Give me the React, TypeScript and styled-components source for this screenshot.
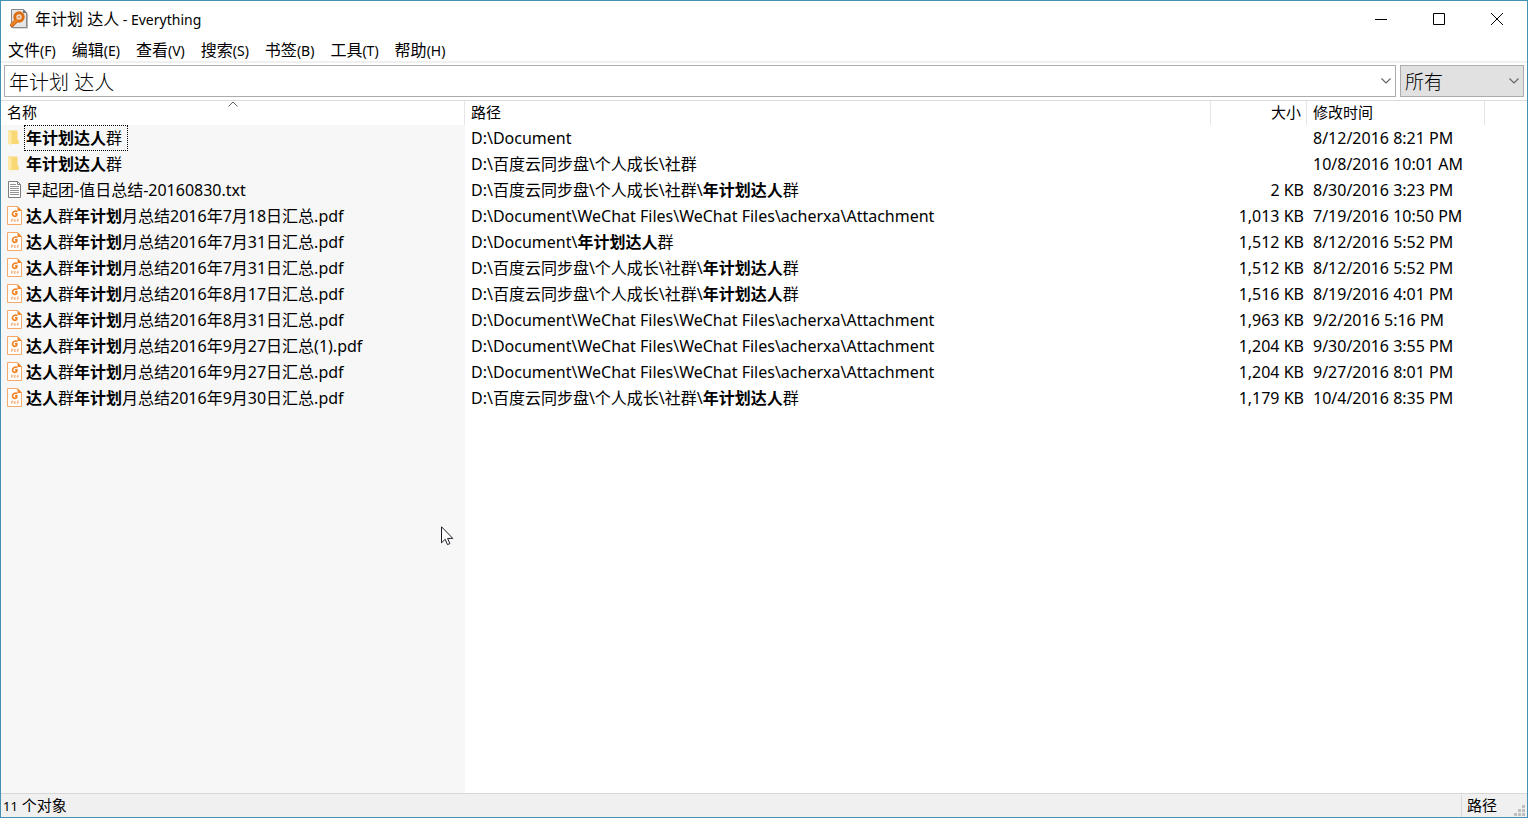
import React from "react";
import styled, { createGlobalStyle } from "styled-components";

const GlobalStyle = createGlobalStyle`
  *, *::before, *::after { box-sizing: border-box; }
  body { margin: 0; background: #fff; }
  body, button, input, select, table {
    font-family: "Noto Sans", "Noto Sans CJK SC", sans-serif;
    color: #000;
  }
`;

const Window = styled.div`
  display: flex;
  flex-direction: column;
  min-height: 100vh;
  border: 1px solid #4392b5;
  background: #fff;
`;

const TitleBar = styled.header`
  display: flex;
  align-items: center;
  height: 36px;
  padding: 0 1px 0 8px;
`;

const Title = styled.h1`
  flex: 1;
  margin: 0 0 0 6px;
  font-size: 16px;
  line-height: 24px;
  font-weight: 400;
`;

const Latin = styled.span<{ $size: number }>`
  font-size: ${(p) => p.$size}px;
`;

const WindowButton = styled.button`
  display: grid;
  place-items: center;
  width: 58px;
  height: 36px;
  padding: 0;
  border: 0;
  background: transparent;
`;

const MenuBar = styled.nav`
  display: flex;
  gap: 16px;
  height: 26px;
  padding: 0 7px;
  border-bottom: 2px solid #f0f0f0;
`;

const MenuButton = styled.button`
  padding: 1px 0 0;
  border: 0;
  background: transparent;
  font-size: 16px;
  line-height: 24px;
  white-space: nowrap;
`;

const SearchRow = styled.div`
  display: flex;
  gap: 4px;
  padding: 2px 3px 3px;
`;

const Combo = styled.div<{ $filter?: boolean }>`
  display: flex;
  align-items: center;
  flex: ${(p) => (p.$filter ? "0 0 124px" : "1 1 0")};
  height: 32px;
  padding-right: 3px;
  border: 1px solid #acacac;
  background: ${(p) => (p.$filter ? "#e1e1e1" : "#fff")};
`;

const SearchInput = styled.input`
  flex: 1;
  min-width: 0;
  height: 30px;
  padding: 0 4px;
  border: 0;
  outline: 0;
  background: transparent;
  font-size: 20px;
  font-weight: 300;
`;

const FilterSelect = styled.select`
  flex: 1;
  min-width: 0;
  height: 30px;
  padding: 1px 4px 0;
  border: 0;
  outline: 0;
  appearance: none;
  background: transparent;
  font-size: 19px;
  font-weight: 300;
`;

const Results = styled.main`
  flex: 1;
  border-top: 1px solid #dcdcdc;
  background: linear-gradient(#f7f7f7, #f7f7f7) 0 24px / 464px 100% no-repeat;
`;

const Table = styled.table`
  width: 100%;
  table-layout: fixed;
  border-collapse: separate;
  border-spacing: 0;
  font-size: 16px;
`;

const Col = styled.col<{ $width?: number }>`
  width: ${(p) => (p.$width ? `${p.$width}px` : "auto")};
`;

const HeadCell = styled.th<{ $align?: string; $last?: boolean }>`
  height: 24px;
  padding: 0 5px 2px 6px;
  border-right: ${(p) => (p.$last ? "0" : "1px solid #e5e5e5")};
  background: #fff;
  font-size: 15px;
  line-height: 22px;
  font-weight: 400;
  text-align: ${(p) => p.$align ?? "left"};
  white-space: nowrap;
`;

const SortHead = styled.div`
  position: relative;
`;

const SortMark = styled.svg`
  position: absolute;
  top: 0;
  left: 50%;
  transform: translateX(-50%);
`;

const Cell = styled.td<{ $align?: string }>`
  height: 26px;
  padding: 0 3px 0 6px;
  line-height: 24px;
  text-align: ${(p) => p.$align ?? "left"};
  white-space: nowrap;
`;

const FileCell = styled.div`
  display: flex;
  align-items: center;
`;

const FileName = styled.span<{ $focused?: boolean }>`
  margin-left: 1px;
  padding: 0 5px 0 1px;
  border: 1px dotted ${(p) => (p.$focused ? "#000" : "transparent")};
`;

const StatusBar = styled.footer`
  display: flex;
  justify-content: space-between;
  height: 24px;
  border-top: 1px solid #d7d7d7;
  background: #f0f0f0;
  font-size: 15px;
  line-height: 22px;
`;

const StatusText = styled.span`
  padding-left: 2px;
`;

const StatusPanel = styled.div`
  display: flex;
  align-items: flex-end;
  justify-content: space-between;
  width: 66px;
  margin-top: 1px;
  padding: 0 2px 1px 5px;
  border-left: 1px solid #d7d7d7;
`;

const Pointer = styled.svg`
  position: absolute;
  left: 441px;
  top: 526px;
  pointer-events: none;
`;

function AppIcon() {
  return (
    <svg width="20" height="20" viewBox="0 0 20 20" aria-hidden="true">
      <path d="M4 2h12l3 3v14.500H4z" fill="#b5b5b5" />
      <path d="M2.500.500h12l3 3v15h-15z" fill="#e6e6e6" stroke="#8a8a8a" />
      <path d="M14 .500v3.500h4z" fill="#777" />
      <path d="M7.500 11.500 3 16" stroke="#c9600f" strokeWidth="4" strokeLinecap="round" />
      <circle cx="10" cy="8" r="4.200" fill="#f5dcc4" stroke="#dc6f14" strokeWidth="3" />
      <path d="M7.500 11.500 3 15.500" stroke="#ee8526" strokeWidth="2.400" strokeLinecap="round" />
      <circle cx="10" cy="8" r="1.300" fill="#d99a6a" />
    </svg>
  );
}

function FolderIcon() {
  return (
    <svg width="16" height="18" viewBox="0 0 16 18" aria-hidden="true">
      <path d="M1 1.500h9.500v9h1V15H4.500L1 14z" fill="#f9d978" />
      <path d="M9.500 3v8h2v4H4.500V3z" fill="#f8d775" />
      <path d="M1 1.500l3.500 2v13L1 14.500z" fill="#ffe8a3" />
    </svg>
  );
}

function TextIcon() {
  return (
    <svg width="16" height="18" viewBox="0 0 16 18" aria-hidden="true">
      <path d="M1.500.500h9l3 3v13h-12z" fill="#fff" stroke="#7c7c7c" />
      <path d="M10.500.500v3h3" fill="none" stroke="#7c7c7c" />
      <path d="M3 3.500h6M3 5.500h9M3 7.500h9M3 9.500h9M3 11.500h9M3 13.500h9" stroke="#949494" />
    </svg>
  );
}

function PdfIcon() {
  return (
    <svg width="16" height="20" viewBox="0 0 16 20" aria-hidden="true">
      <path d="M.5.500h10l4 4v14H.500z" fill="#fff" stroke="#f5a96a" />
      <path d="M10.500 0v5h4.500z" fill="#f18a32" />
      <path d="M10.500 5.500C7.500 4.500 5.500 6 5.500 8s2.500 3.200 4 1.600c.6-.7.5-1.200.3-1.800H8" fill="none" stroke="#f18427" strokeWidth="1.700" />
      <path d="M4.500 16v-3H6v1.500H4.500M7.500 13v3M8 13l1 1.500L8 16M10.500 16v-3H12M10.500 14.500H12" fill="none" stroke="#f6b07c" strokeWidth=".8" />
    </svg>
  );
}

function Chevron() {
  return (
    <svg width="12" height="8" viewBox="0 0 12 8" aria-hidden="true">
      <path d="M1.500 1.500 6 6l4.500-4.500" fill="none" stroke="#606060" strokeWidth="1.100" />
    </svg>
  );
}

type Kind = "folder" | "text" | "pdf";

/* Asterisks enclose the parts of a name that match the search terms. */
function Marked({ text }: { text: string }) {
  return <>{text.split("*").map((part, i) => (i % 2 ? <b key={i}>{part}</b> : part))}</>;
}

const icons = { folder: FolderIcon, text: TextIcon, pdf: PdfIcon };

const attachment = "D:\\Document\\WeChat Files\\WeChat Files\\acherxa\\Attachment";
const community = "D:\\百度云同步盘\\个人成长\\社群";
const group = "*年计划达人*群";

const files: { kind: Kind; name: string; path: string; size: string; date: string }[] = [
  { kind: "folder", name: group, path: "D:\\Document", size: "", date: "8/12/2016 8:21 PM" },
  { kind: "folder", name: group, path: community, size: "", date: "10/8/2016 10:01 AM" },
  { kind: "text", name: "早起团-值日总结-20160830.txt", path: `${community}\\${group}`, size: "2 KB", date: "8/30/2016 3:23 PM" },
  { kind: "pdf", name: "*达人*群*年计划*月总结2016年7月18日汇总.pdf", path: attachment, size: "1,013 KB", date: "7/19/2016 10:50 PM" },
  { kind: "pdf", name: "*达人*群*年计划*月总结2016年7月31日汇总.pdf", path: `D:\\Document\\${group}`, size: "1,512 KB", date: "8/12/2016 5:52 PM" },
  { kind: "pdf", name: "*达人*群*年计划*月总结2016年7月31日汇总.pdf", path: `${community}\\${group}`, size: "1,512 KB", date: "8/12/2016 5:52 PM" },
  { kind: "pdf", name: "*达人*群*年计划*月总结2016年8月17日汇总.pdf", path: `${community}\\${group}`, size: "1,516 KB", date: "8/19/2016 4:01 PM" },
  { kind: "pdf", name: "*达人*群*年计划*月总结2016年8月31日汇总.pdf", path: attachment, size: "1,963 KB", date: "9/2/2016 5:16 PM" },
  { kind: "pdf", name: "*达人*群*年计划*月总结2016年9月27日汇总(1).pdf", path: attachment, size: "1,204 KB", date: "9/30/2016 3:55 PM" },
  { kind: "pdf", name: "*达人*群*年计划*月总结2016年9月27日汇总.pdf", path: attachment, size: "1,204 KB", date: "9/27/2016 8:01 PM" },
  { kind: "pdf", name: "*达人*群*年计划*月总结2016年9月30日汇总.pdf", path: `${community}\\${group}`, size: "1,179 KB", date: "10/4/2016 8:35 PM" },
];

const menus = [
  ["文件", "F"],
  ["编辑", "E"],
  ["查看", "V"],
  ["搜索", "S"],
  ["书签", "B"],
  ["工具", "T"],
  ["帮助", "H"],
];

export default function App() {
  return (
    <Window>
      <GlobalStyle />
      <TitleBar>
        <AppIcon />
        <Title>
          年计划 达人<Latin $size={14}> - Everything</Latin>
        </Title>
        <WindowButton aria-label="最小化">
          <svg width="12" height="12"><path d="M0 6.500h12" stroke="#000" /></svg>
        </WindowButton>
        <WindowButton aria-label="最大化">
          <svg width="12" height="12"><path d="M.5.5h11v11H.5z" fill="none" stroke="#000" /></svg>
        </WindowButton>
        <WindowButton aria-label="关闭">
          <svg width="12" height="12"><path d="M0 0l12 12M12 0 0 12" stroke="#000" /></svg>
        </WindowButton>
      </TitleBar>
      <MenuBar>
        {menus.map(([label, key]) => (
          <MenuButton key={key}>
            {label}
            <Latin $size={14}>({key})</Latin>
          </MenuButton>
        ))}
      </MenuBar>
      <SearchRow>
        <Combo>
          <SearchInput aria-label="搜索" defaultValue="年计划 达人" />
          <Chevron />
        </Combo>
        <Combo $filter>
          <FilterSelect aria-label="筛选器">
            <option>所有</option>
          </FilterSelect>
          <Chevron />
        </Combo>
      </SearchRow>
      <Results>
        <Table>
          <colgroup>
            <Col $width={464} />
            <Col />
            <Col $width={96} />
            <Col $width={178} />
            <Col $width={42} />
          </colgroup>
          <thead>
            <tr>
              <HeadCell aria-sort="ascending">
                <SortHead>
                  名称
                  <SortMark width="11" height="6" viewBox="0 0 11 6" aria-hidden="true">
                    <path d="M1 5.500 5.500 1 10 5.500" fill="none" stroke="#606060" />
                  </SortMark>
                </SortHead>
              </HeadCell>
              <HeadCell>路径</HeadCell>
              <HeadCell $align="right">大小</HeadCell>
              <HeadCell>修改时间</HeadCell>
              <HeadCell $last />
            </tr>
          </thead>
          <tbody>
            {files.map((file, i) => {
              const Icon = icons[file.kind];
              return (
                <tr key={i}>
                  <Cell>
                    <FileCell>
                      <Icon />
                      <FileName $focused={i === 0}>
                        <Marked text={file.name} />
                      </FileName>
                    </FileCell>
                  </Cell>
                  <Cell>
                    <Marked text={file.path} />
                  </Cell>
                  <Cell $align="right">{file.size}</Cell>
                  <Cell>{file.date}</Cell>
                  <Cell />
                </tr>
              );
            })}
          </tbody>
        </Table>
      </Results>
      <StatusBar>
        <StatusText>
          <Latin $size={13}>11</Latin> 个对象
        </StatusText>
        <StatusPanel>
          路径
          <svg width="11" height="11" viewBox="0 0 11 11" aria-hidden="true">
            <path d="M8 0h3v3H8zM4 4h3v3H4zM8 4h3v3H8zM0 8h3v3H0zM4 8h3v3H4zM8 8h3v3H8z" fill="#bfbfbf" />
          </svg>
        </StatusPanel>
      </StatusBar>
      <Pointer width="13" height="20" viewBox="0 0 13 20" aria-hidden="true">
        <path d="M.5.800v16l3.700-3.500 2.300 5.300 2.400-1-2.300-5.200h5.200z" fill="#fff" stroke="#1c1c28" />
      </Pointer>
    </Window>
  );
}
